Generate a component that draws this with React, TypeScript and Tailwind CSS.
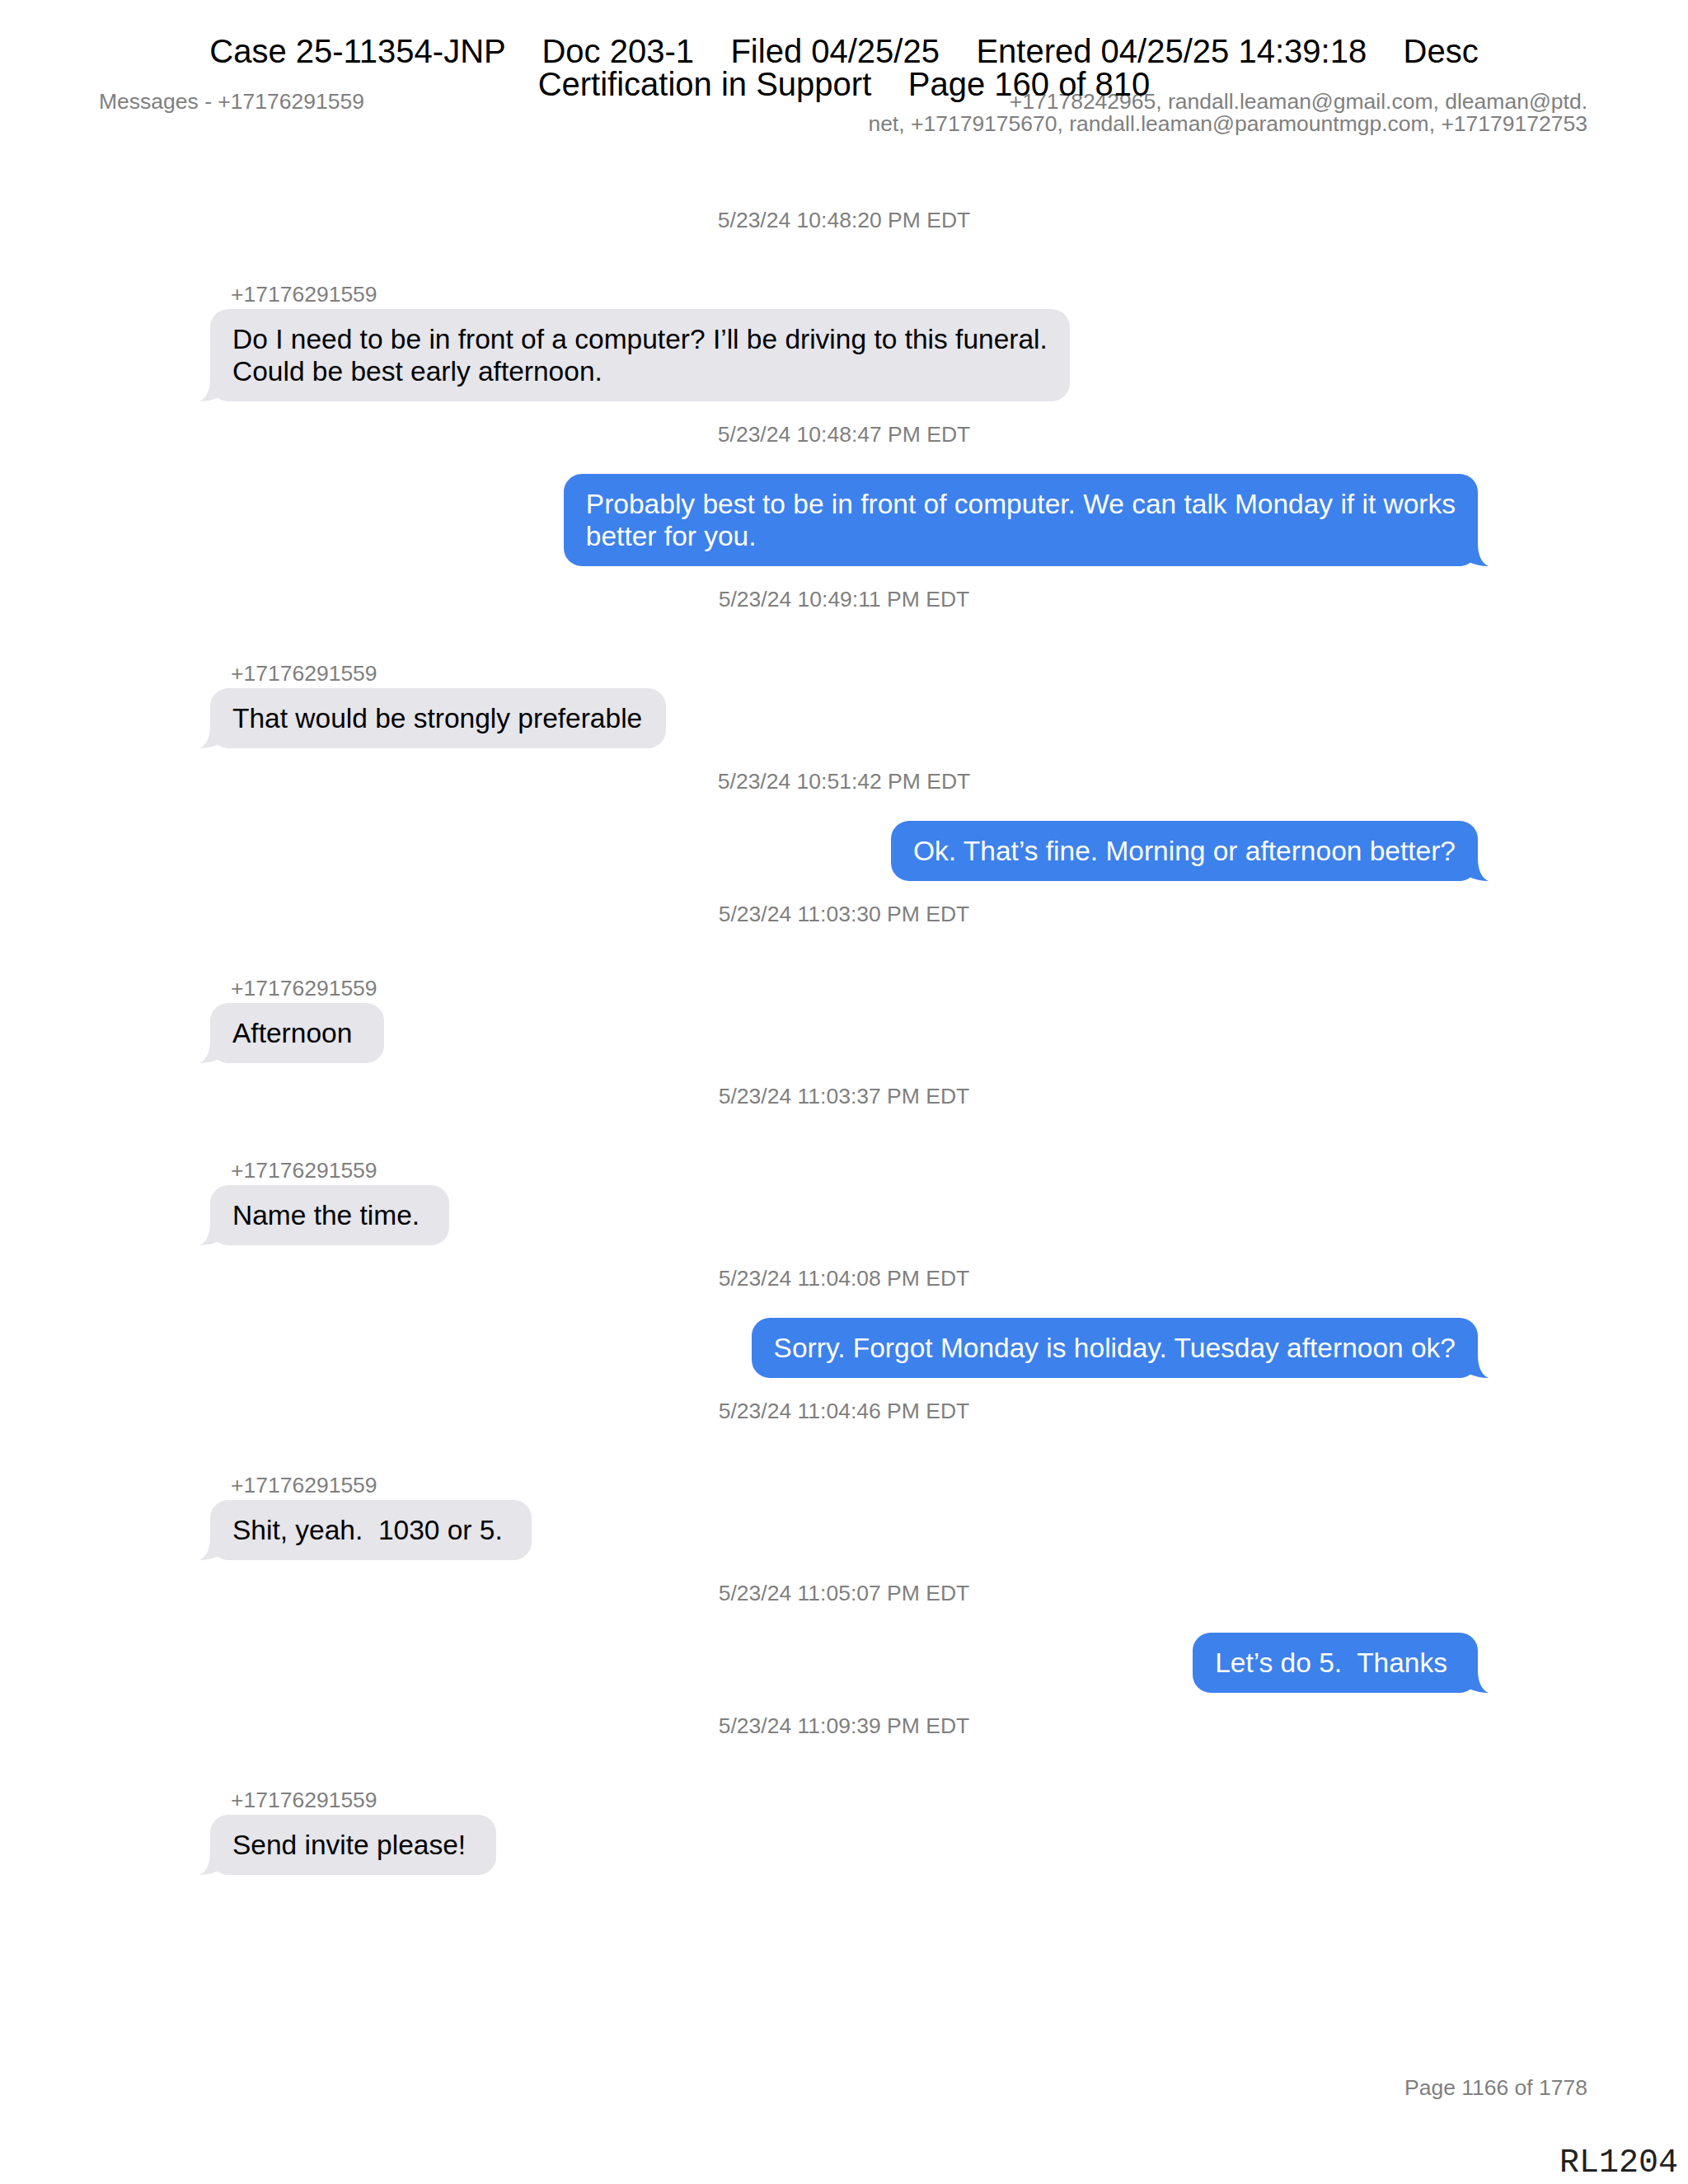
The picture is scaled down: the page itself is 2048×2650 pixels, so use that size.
import React from "react";

type Msg = {
  time: string;
  from?: string;
  lines: string[];
  out?: boolean;
  extra?: number;
};

const messages: Msg[] = [
  {
    time: "5/23/24 10:48:20 PM EDT",
    from: "+17176291559",
    lines: [
      "Do I need to be in front of a computer? I\u2019ll be driving to this funeral.",
      "Could be best early afternoon.",
    ],
  },
  {
    time: "5/23/24 10:48:47 PM EDT",
    out: true,
    lines: [
      "Probably best to be in front of computer. We can talk Monday if it works",
      "better for you.",
    ],
  },
  { time: "5/23/24 10:49:11 PM EDT", from: "+17176291559", lines: ["That would be strongly preferable"], extra: 2 },
  { time: "5/23/24 10:51:42 PM EDT", out: true, lines: ["Ok. That\u2019s fine. Morning or afternoon better?"] },
  { time: "5/23/24 11:03:30 PM EDT", from: "+17176291559", lines: ["Afternoon"], extra: 12 },
  { time: "5/23/24 11:03:37 PM EDT", from: "+17176291559", lines: ["Name the time."], extra: 9 },
  {
    time: "5/23/24 11:04:08 PM EDT",
    out: true,
    lines: ["Sorry. Forgot Monday is holiday. Tuesday afternoon ok?"],
  },
  { time: "5/23/24 11:04:46 PM EDT", from: "+17176291559", lines: ["Shit, yeah.  1030 or 5."], extra: 8 },
  { time: "5/23/24 11:05:07 PM EDT", out: true, lines: ["Let\u2019s do 5.  Thanks"], extra: 10 },
  { time: "5/23/24 11:09:39 PM EDT", from: "+17176291559", lines: ["Send invite please!"], extra: 10 },
];

function Tail({ color, flip }: { color: string; flip?: boolean }) {
  return (
    <svg
      width="35"
      height="28"
      viewBox="0 0 35 28"
      className={`absolute bottom-0 ${flip ? "left-[-13px] -scale-x-100" : "right-[-13px]"}`}
    >
      <path
        d="M0 0 H22 C22 14 26 24 35 28 C27 28 18 26 11 23 C9 25 6 27 0 28 Z"
        fill={color}
      />
    </svg>
  );
}

function Bubble({ msg }: { msg: Msg }) {
  const out = !!msg.out;
  return (
    <div
      className={`relative w-fit rounded-[22px] pl-[27px] py-[17px] text-[33.5px] leading-[39px] whitespace-pre ${
        out ? "bg-[#3d81ec] text-white self-end mr-[255px]" : "bg-[#e5e5ea] text-black ml-[255px]"
      }`}
      style={{ paddingRight: 27 + (msg.extra ?? 0) }}
    >
      {msg.lines.map((l, i) => (
        <div key={i}>{l}</div>
      ))}
      <Tail color={out ? "#3d81ec" : "#e5e5ea"} flip={!out} />
    </div>
  );
}

export default function App() {
  return (
    <div
      className="relative flex h-[2650px] w-[2048px] flex-col bg-white"
      style={{ fontFamily: '"Liberation Sans", Arial, sans-serif' }}
    >
      {/* court filing stamp laid over the page */}
      <div className="absolute left-0 right-0 top-[41.5px] text-center text-[40px] leading-[40px] text-black whitespace-pre">
        <div>{"Case 25-11354-JNP    Doc 203-1    Filed 04/25/25    Entered 04/25/25 14:39:18    Desc"}</div>
        <div>{"Certification in Support    Page 160 of 810"}</div>
      </div>

      <div className="flex justify-between pl-[120px] pr-[122px] pt-[110px] text-[26.5px] leading-[27px] text-[#7f7f7f]">
        <span>Messages - +17176291559</span>
        <div className="text-right">
          <div>+17178242965, randall.leaman@gmail.com, dleaman@ptd.</div>
          <div>net, +17179175670, randall.leaman@paramountmgp.com, +17179172753</div>
        </div>
      </div>

      <div className="mt-[87px] flex flex-col">
        {messages.map((m, i) => (
          <React.Fragment key={i}>
            <div
              className={`h-[32px] text-center text-[26.5px] leading-[32px] text-[#7f7f7f] ${
                i === 0 ? "" : "mt-[24px]"
              }`}
            >
              {m.time}
            </div>
            {m.out ? (
              <div className="mt-[32px] flex flex-col">
                <Bubble msg={m} />
              </div>
            ) : (
              <div className="flex flex-col">
                <div className="mt-[57.5px] h-[32px] pl-[280px] text-[26.5px] leading-[32px] text-[#7f7f7f]">
                  {m.from}
                </div>
                <div className="mt-[2.5px] flex flex-col">
                  <Bubble msg={m} />
                </div>
              </div>
            )}
          </React.Fragment>
        ))}
      </div>

      <div className="mt-auto flex flex-col items-end pb-[5px]">
        <div className="pr-[122px] text-[26.5px] leading-[32px] text-[#7f7f7f]">Page 1166 of 1778</div>
        <div
          className="mt-[56px] pr-[12px] text-[40px] leading-[40px] text-[#222]"
          style={{ fontFamily: '"Liberation Mono", "Courier New", monospace' }}
        >
          RL1204
        </div>
      </div>
    </div>
  );
}
